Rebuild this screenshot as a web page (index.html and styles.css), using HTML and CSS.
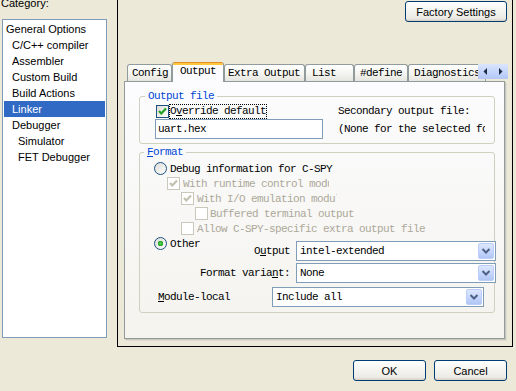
FILE: index.html
```html
<!DOCTYPE html>
<html lang="en">

<head>
  <meta charset="UTF-8" />
  <title>Options</title>
  <link rel="stylesheet" href="styles.css">
</head>

<body>
  <div class="dialog">
    <div class="main">
      <div class="category">
        <div class="category-label">Category:</div>
        <ul class="tree">
          <li class="lvl0">General Options</li>
          <li class="lvl1">C/C++ compiler</li>
          <li class="lvl1">Assembler</li>
          <li class="lvl1">Custom Build</li>
          <li class="lvl1">Build Actions</li>
          <li class="lvl1 selected">Linker</li>
          <li class="lvl1">Debugger</li>
          <li class="lvl2">Simulator</li>
          <li class="lvl2">FET Debugger</li>
        </ul>
      </div>

      <div class="options">
        <div class="top-row">
          <button class="btn btn-factory">Factory Settings</button>
        </div>

        <div class="tab-control">
          <div class="tabs">
            <div class="tab tab-config">Config</div>
            <div class="tab active">Output</div>
            <div class="tab tab-extra">Extra Output</div>
            <div class="tab tab-list">List</div>
            <div class="tab tab-define">#define</div>
            <div class="tab tab-diag">Diagnostics</div>
            <div class="tab-scroll">
              <span class="scroll-btn">
                <svg width="15" height="15" viewBox="0 0 15 15"><polygon points="9,4 9,11 5.5,7.5" fill="#1F2A44"/></svg>
              </span>
              <span class="scroll-btn">
                <svg width="15" height="15" viewBox="0 0 15 15"><polygon points="6,4 6,11 9.5,7.5" fill="#1F2A44"/></svg>
              </span>
            </div>
          </div>

          <div class="tab-page">
            <fieldset class="group group-output">
              <legend>Output file</legend>
              <div class="output-grid">
                <div class="check">
                  <span class="box">
                    <svg width="11" height="11" viewBox="0 0 11 11"><polyline points="2,5 4.3,7.5 9,2.5" fill="none" stroke="#21A121" stroke-width="2.2"/></svg>
                  </span>
                  <span class="focus-text">O<u>v</u>erride default</span>
                </div>
                <div class="static">Secondary output file:</div>
                <div class="textbox">uart.hex</div>
                <div class="static clip">(None for the selected format)</div>
              </div>
            </fieldset>

            <fieldset class="group group-format">
              <legend><u>F</u>ormat</legend>
              <div class="row">
                <span class="radio"></span>
                <span class="row-text">Debug information for C-SPY</span>
              </div>
              <div class="row disabled indent1">
                <span class="box">
                  <svg width="11" height="11" viewBox="0 0 11 11"><polyline points="2,5 4.3,7.5 9,2.5" fill="none" stroke="#C3C0AF" stroke-width="2.2"/></svg>
                </span>
                <span class="row-text clip clip-runtime">With runtime control module</span>
              </div>
              <div class="row disabled indent2">
                <span class="box">
                  <svg width="11" height="11" viewBox="0 0 11 11"><polyline points="2,5 4.3,7.5 9,2.5" fill="none" stroke="#C3C0AF" stroke-width="2.2"/></svg>
                </span>
                <span class="row-text clip clip-io">With I/O emulation modules</span>
              </div>
              <div class="row disabled indent3">
                <span class="box"></span>
                <span class="row-text">Buffered terminal output</span>
              </div>
              <div class="row disabled indent2">
                <span class="box"></span>
                <span class="row-text">Allow C-SPY-specific extra output file</span>
              </div>

              <div class="other-block">
                <div class="row">
                  <span class="radio checked"></span>
                  <span class="row-text">Other</span>
                </div>
                <div class="combo-grid">
                  <span class="combo-label">O<u>u</u>tput</span>
                  <div class="combo">
                    <span class="combo-text">intel-extended</span>
                    <span class="drop">
                      <svg width="16" height="16" viewBox="0 0 16 16"><path d="M4.5 6 8 9.5 11.5 6" fill="none" stroke="#4D6185" stroke-width="2"/></svg>
                    </span>
                  </div>
                  <span class="combo-label">Format varia<u>n</u>t:</span>
                  <div class="combo">
                    <span class="combo-text">None</span>
                    <span class="drop">
                      <svg width="16" height="16" viewBox="0 0 16 16"><path d="M4.5 6 8 9.5 11.5 6" fill="none" stroke="#4D6185" stroke-width="2"/></svg>
                    </span>
                  </div>
                </div>
              </div>

              <div class="module-row">
                <span class="combo-label"><u>M</u>odule-local</span>
                <div class="combo combo-module">
                  <span class="combo-text">Include all</span>
                  <span class="drop">
                    <svg width="16" height="16" viewBox="0 0 16 16"><path d="M4.5 6 8 9.5 11.5 6" fill="none" stroke="#4D6185" stroke-width="2"/></svg>
                  </span>
                </div>
              </div>
            </fieldset>
          </div>
        </div>
      </div>
    </div>

    <div class="bottom-row">
      <button class="btn">OK</button>
      <button class="btn">Cancel</button>
    </div>
  </div>
</body>

</html>
```

FILE: styles.css
```css
* {
  margin: 0;
  padding: 0;
  box-sizing: border-box;
}

body {
  font-family: "Liberation Sans", Arial, sans-serif;
  font-size: 11px;
  background-color: #ece9d8;
  color: #000;
  overflow: hidden;
}

.dialog {
  width: 516px;
  height: 391px;
  overflow: hidden;
}

.main {
  display: flex;
  height: 347px;
}

/* left pane */

.category {
  width: 117px;
}

.category-label {
  line-height: 13px;
  margin-top: -3px;
  margin-bottom: 9px;
  padding-left: 1px;
}

.tree {
  list-style: none;
  margin-left: 2px;
  width: 105px;
  height: 319px;
  border: 1px solid #7f9db9;
  background-color: #fff;
  padding: 1px;
}

.tree li {
  height: 16px;
  line-height: 16px;
  white-space: nowrap;
}

.lvl0 { padding-left: 2px; }
.lvl1 { padding-left: 8px; }
.lvl2 { padding-left: 14px; }

.tree .selected {
  background-color: #316ac5;
  color: #fff;
}

/* right pane */

.options {
  width: 396px;
  height: 348px;
  margin-top: -1px;
  border: 1px solid #000;
  padding: 1px 5px 0 6px;
}

.top-row {
  display: flex;
  justify-content: flex-end;
}

.btn {
  font-family: "Liberation Sans", Arial, sans-serif;
  font-size: 11px;
  color: #000;
  width: 73px;
  height: 21px;
  border: 1px solid #003c74;
  border-radius: 3px;
  background: linear-gradient(#ffffff, #f4f4f0 45%, #ecebe6 85%, #d6d0c5);
}

.btn-factory {
  width: 102px;
}

.tab-control {
  margin-top: 40px;
}

.tabs {
  position: relative;
  display: flex;
  align-items: flex-end;
  height: 19px;
  padding-left: 3px;
  font-family: "Liberation Mono", monospace;
  font-size: 11px;
  letter-spacing: -0.6px;
}

.tab {
  height: 17px;
  line-height: 16px;
  padding: 0 4px;
  border: 1px solid #919b9c;
  border-bottom: none;
  border-radius: 3px 3px 0 0;
  background: linear-gradient(#ffffff, #f3f3ef 60%, #e6e5df);
  white-space: nowrap;
}

.tab-config { padding: 0 3px 0 4px; }
.tab-extra { padding: 0 4px 0 3px; }
.tab-list { padding: 0 17px 0 6px; }
.tab-define { padding: 0 5px; }
.tab-diag { padding: 0 5px; }

.tab.active {
  position: relative;
  z-index: 1;
  height: 20px;
  margin-bottom: -1px;
  padding: 0 7px;
  line-height: 19px;
  border-top: none;
  border-color: #919b9c;
  background: linear-gradient(#e68b2c 0 1px, #ffc73c 1px 3px, #fcfcfe 3px);
}

.tab-scroll {
  position: absolute;
  right: -1px;
  top: 2px;
  z-index: 2;
  display: flex;
  background-color: #fcfcfe;
}

.scroll-btn {
  width: 15px;
  height: 15px;
  background: linear-gradient(#dbe6fd, #c1d3fb 60%, #b3c7f5);
}

.scroll-btn svg {
  display: block;
}

.tab-page {
  width: 381px;
  height: 258px;
  border: 1px solid #919b9c;
  background: linear-gradient(#fcfcfe, #f4f3ee);
  box-shadow: 1px 1px 0 #c9c7ba, 2px 2px 0 #dedcd0;
  padding: 8px 9px 0 14px;
  font-family: "Liberation Mono", monospace;
  font-size: 11px;
  letter-spacing: -0.6px;
}

/* group boxes */

.group {
  border: 1px solid #d0d0bf;
  border-radius: 3px;
  min-width: 0;
}

.group legend {
  line-height: 12px;
  color: #0046d5;
  padding: 0 3px;
  margin-left: -10px;
}

.group-output {
  padding: 2px 8px 4px 15px;
}

.output-grid {
  display: grid;
  grid-template-columns: 168px 147px;
  grid-template-rows: 14px 20px;
  column-gap: 15px;
  row-gap: 1px;
}

.check {
  display: flex;
  align-items: center;
  padding-left: 1px;
}

.box {
  width: 13px;
  height: 13px;
  flex: none;
  border: 1px solid #1c5180;
  background: linear-gradient(135deg, #dcdcd7, #ffffff);
  display: flex;
  align-items: center;
  justify-content: center;
}

.focus-text {
  margin-left: 1px;
  line-height: 13px;
  outline: 1px dotted #000;
}

.static {
  line-height: 14px;
  white-space: nowrap;
}

.output-grid .clip {
  line-height: 20px;
}

.clip {
  overflow: hidden;
  white-space: nowrap;
}

.textbox {
  border: 1px solid #7f9db9;
  background-color: #fff;
  padding-left: 2px;
  line-height: 18px;
}

.group-format {
  margin-top: 2px;
  padding: 3px 10px 5px 14px;
}

.row {
  display: flex;
  align-items: center;
  height: 15px;
  white-space: nowrap;
}

.row-text {
  margin-left: 3px;
}

.indent1 { padding-left: 13px; }
.indent2 { padding-left: 27px; }
.indent3 { padding-left: 41px; }

.indent3 .row-text {
  margin-left: 2px;
}

.clip-runtime { width: 146px; }
.clip-io { width: 140px; }

.disabled {
  color: #aca899;
}

.disabled .box {
  border-color: #cac8bb;
  background: #fff;
}

.radio {
  width: 13px;
  height: 13px;
  flex: none;
  border: 1px solid #1c5180;
  border-radius: 50%;
  background: linear-gradient(135deg, #dcdcd7, #ffffff);
}

.radio.checked {
  background: radial-gradient(circle, #5bd85b 0, #21a121 2.5px, transparent 3px), linear-gradient(135deg, #dcdcd7, #ffffff);
}

.other-block {
  display: flex;
  align-items: flex-start;
}

.combo-grid {
  margin-left: auto;
  margin-top: 5px;
  display: grid;
  grid-template-columns: auto 200px;
  grid-auto-rows: 20px;
  column-gap: 6px;
  row-gap: 2px;
}

.combo-label {
  line-height: 20px;
  text-align: right;
  white-space: nowrap;
}

.combo {
  display: flex;
  align-items: center;
  height: 20px;
  border: 1px solid #7f9db9;
  background-color: #fff;
}

.combo-text {
  flex: 1;
  padding-left: 3px;
  white-space: nowrap;
}

.drop {
  width: 16px;
  height: 16px;
  margin-right: 1px;
  border: 1px solid #bccdf9;
  border-radius: 2px;
  background: linear-gradient(#dce7fe, #c4d6fc 55%, #b1c6f6);
}

.drop svg {
  display: block;
  margin: -1px;
}

.module-row {
  display: flex;
  margin-top: 4px;
  padding-left: 4px;
}

.combo-module {
  margin-left: auto;
  width: 212px;
}

/* dialog buttons */

.bottom-row {
  display: flex;
  justify-content: flex-end;
  gap: 8px;
  margin-top: 13px;
  padding-right: 9px;
}
```
